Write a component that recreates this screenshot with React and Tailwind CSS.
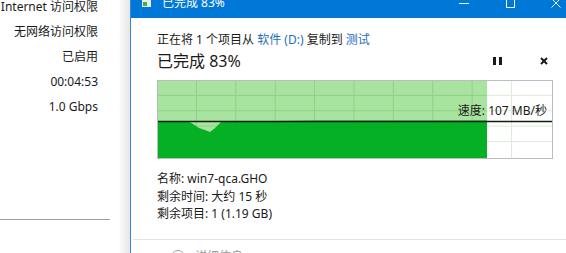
import React from "react";

const font = { fontFamily: '"Noto Sans", "Noto Sans CJK SC", sans-serif' };

const info = ["Internet 访问权限", "无网络访问权限", "已启用", "00:04:53", "1.0 Gbps"];

const SpeedChart = () => {
  const cols = [1, 2, 3, 4, 5, 6, 7, 8, 9].map((k) => k * 39.4);
  const rows = [1, 2, 3, 4].map((k) => k * 15.4);
  return (
    <svg width="396" height="79" className="block">
      <rect x="0.5" y="0.5" width="395" height="78" fill="#ffffff" stroke="#bcbcbc" />
      {cols.map((x) => (
        <line key={"w" + x} x1={x} y1="1" x2={x} y2="78" stroke="#dcebd9" />
      ))}
      {rows.map((y) => (
        <line key={"h" + y} x1="1" y1={y} x2="395" y2={y} stroke="#dcebd9" />
      ))}
      <rect x="1" y="1" width="329" height="77" fill="#a8e4a0" />
      {cols
        .filter((x) => x < 330)
        .map((x) => (
          <line key={"g" + x} x1={x} y1="1" x2={x} y2="78" stroke="#8ed287" />
        ))}
      {rows.map((y) => (
        <line key={"gh" + y} x1="1" y1={y} x2="330" y2={y} stroke="#8ed287" />
      ))}
      <polygon
        points="1,41 31,41 36,44 42,48 48,50 53,52 58,48 62,44 65,41 120,41 160,40.5 330,40.5 330,78 1,78"
        fill="#06b025"
      />
      <line x1="1" y1="41.5" x2="395" y2="41.5" stroke="#111d11" strokeWidth="1.4" />
      <text x="390" y="35" textAnchor="end" fontSize="12" fill="#1a1a1a" style={font}>
        速度: 107 MB/秒
      </text>
    </svg>
  );
};

const App = () => {
  return (
    <div className="w-[566px] h-[253px] overflow-hidden flex bg-white text-[#1a1a1a]" style={font}>
      <div className="w-[118px] shrink-0 flex flex-col bg-white">
        <div className="shrink-0 -mt-[6.5px] pr-[20px] text-right text-[12px] leading-[25px] whitespace-nowrap">
          {info.map((t) => (
            <div key={t}>{t}</div>
          ))}
        </div>
        <div className="shrink-0 mt-auto mb-[33px] h-px w-[110px] bg-[#a0a0a0]" />
      </div>
      <div className="w-[12px] shrink-0 bg-gradient-to-r from-white to-[#e6e6e6]" />

      <div className="flex-1 flex flex-col border-l border-[#3b86cf] min-w-0">
        <div className="shrink-0 -mt-[12px] h-[30px] bg-[#0078d7] flex items-center text-white -mr-[13px]">
          <svg width="9" height="8" viewBox="0 0 9 8" className="ml-[11px]">
            <rect x="0" y="0" width="9" height="8" fill="#e8eef4" />
            <rect x="1" y="3" width="4" height="4" fill="#3cb43c" />
          </svg>
          <span className="ml-[11px] text-[12px]">已完成 83%</span>
          <div className="ml-auto flex">
            <div className="w-[46px] flex items-center justify-center">
              <div className="w-[10px] h-px bg-white" />
            </div>
            <div className="w-[46px] flex items-center justify-center">
              <div className="w-[9px] h-[9px] border border-white" />
            </div>
            <div className="w-[46px] flex items-center justify-center">
              <svg width="10" height="10" viewBox="0 0 10 10">
                <path d="M0.5 0.5 L9.5 9.5 M9.5 0.5 L0.5 9.5" stroke="#fff" strokeWidth="1" />
              </svg>
            </div>
          </div>
        </div>

        <div className="shrink-0 pl-[26px]">
          <div className="mt-[13px] text-[12px] leading-[18px] whitespace-nowrap">
            正在将 1 个项目从 <span className="text-[#1f6dbd]">软件 (D:)</span> 复制到{" "}
            <span className="text-[#1f6dbd]">测试</span>
          </div>
          <div className="mt-[2px] flex items-center pr-[18px]">
            <span className="text-[16px] leading-[20px]">已完成 83%</span>
            <div className="ml-auto flex items-center gap-[38px]">
              <div className="flex gap-[3px]">
                <div className="w-[3px] h-[8px] bg-[#1a1a1a]" />
                <div className="w-[3px] h-[8px] bg-[#1a1a1a]" />
              </div>
              <svg width="8" height="8" viewBox="0 0 8 8">
                <path d="M1 1 L7 7 M7 1 L1 7" stroke="#1a1a1a" strokeWidth="2" />
              </svg>
            </div>
          </div>
          <div className="mt-[9px]">
            <SpeedChart />
          </div>
          <div className="mt-[11px] text-[12px] leading-[17.5px]">
            <div>名称: win7-qca.GHO</div>
            <div>剩余时间: 大约 15 秒</div>
            <div>剩余项目: 1 (1.19 GB)</div>
          </div>
        </div>
        <div className="shrink-0 mt-[16px] ml-[2px] h-px bg-[#e3e3e3]" />
        <div className="shrink-0 mt-[8px] pl-[40px] flex items-center gap-[10px] text-[12px] text-[#9a9a9a]">
          <div className="w-[14px] h-[14px] rounded-full border border-[#a0a0a0]" />
          <span>详细信息</span>
        </div>
      </div>
    </div>
  );
};

export default App;
